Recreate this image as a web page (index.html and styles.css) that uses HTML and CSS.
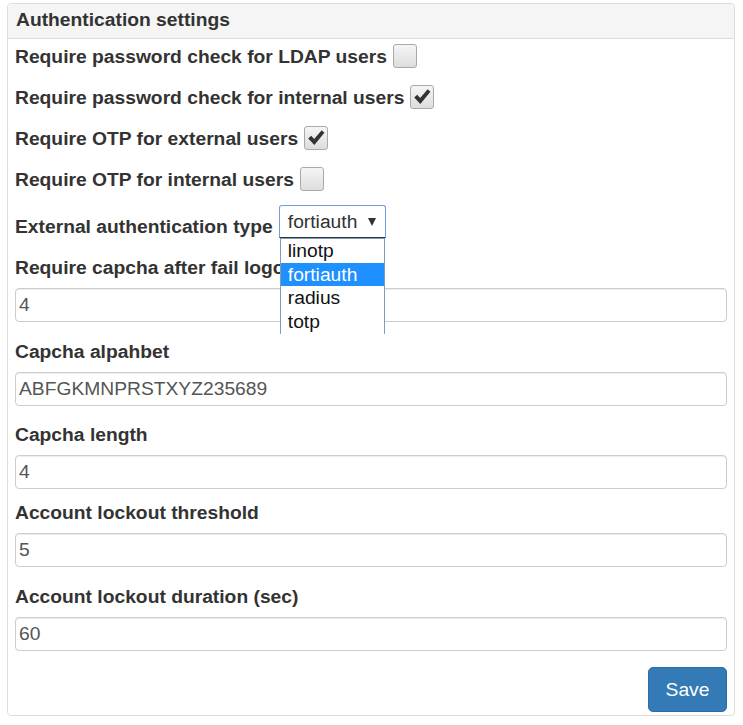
FILE: index.html
```html
<!DOCTYPE html>
<html>
<head>
<meta charset="utf-8">
<title>Authentication settings</title>
<link rel="stylesheet" href="styles.css">
</head>
<body>
<div class="panel">
  <div class="panel-heading">Authentication settings</div>
  <div class="panel-body">
    <div class="check-row">
      <span class="label">Require password check for LDAP users</span>
      <span class="checkbox"></span>
    </div>
    <div class="check-row">
      <span class="label">Require password check for internal users</span>
      <span class="checkbox checked"><svg viewBox="0 0 24 24" width="22" height="22"><path d="M3.5 12.5 L6.8 9.6 L10 13 L18.2 3.6 L21.2 6.4 L10.2 19.6 Z" fill="#333"/></svg></span>
    </div>
    <div class="check-row">
      <span class="label">Require OTP for external users</span>
      <span class="checkbox checked"><svg viewBox="0 0 24 24" width="22" height="22"><path d="M3.5 12.5 L6.8 9.6 L10 13 L18.2 3.6 L21.2 6.4 L10.2 19.6 Z" fill="#333"/></svg></span>
    </div>
    <div class="check-row">
      <span class="label">Require OTP for internal users</span>
      <span class="checkbox"></span>
    </div>
    <div class="select-row">
      <span class="label">External authentication type</span>
      <div class="select-wrap">
        <div class="select">fortiauth<span class="arrow"></span></div>
        <ul class="dropdown">
          <li>linotp</li>
          <li class="active">fortiauth</li>
          <li>radius</li>
          <li>totp</li>
        </ul>
      </div>
    </div>
    <div class="group">
      <div class="label">Require capcha after fail logon</div>
      <input class="input" type="text" value="4">
    </div>
    <div class="group">
      <div class="label">Capcha alpahbet</div>
      <input class="input" type="text" value="ABFGKMNPRSTXYZ235689">
    </div>
    <div class="group group-tight">
      <div class="label">Capcha length</div>
      <input class="input" type="text" value="4">
    </div>
    <div class="group group-short">
      <div class="label">Account lockout threshold</div>
      <input class="input" type="text" value="5">
    </div>
    <div class="group">
      <div class="label">Account lockout duration (sec)</div>
      <input class="input" type="text" value="60">
    </div>
    <div class="actions">
      <button class="btn" type="button">Save</button>
    </div>
  </div>
</div>
</body>
</html>
```
FILE: styles.css
```css
html, body {
  margin: 0;
  padding: 0;
  background: #fff;
}
body {
  font-family: "Liberation Sans", Arial, sans-serif;
  font-size: 19.25px;
  color: #333;
}
.panel {
  margin: 3px 8px 0 7px;
  border: 1px solid #ddd;
  border-radius: 4px;
  background: #fff;
}
.panel-heading {
  background: #f5f5f5;
  border-bottom: 1px solid #ddd;
  border-radius: 4px 4px 0 0;
  padding: 4px 8px 6px;
  line-height: 24px;
  font-weight: bold;
}
.panel-body {
  padding: 5px 7px 3px;
}
.label {
  font-weight: bold;
  line-height: 23px;
  white-space: nowrap;
}
.check-row {
  display: flex;
  align-items: center;
  gap: 6px;
  height: 24px;
  margin-bottom: 17px;
}
.checkbox {
  width: 24px;
  height: 24px;
  box-sizing: border-box;
  border: 1px solid #a9a9a9;
  border-radius: 3px;
  background: linear-gradient(#f5f5f5, #dddddd);
  display: flex;
  align-items: center;
  justify-content: center;
}
.select-row {
  display: flex;
  align-items: flex-end;
  gap: 6px;
  margin-top: -3px;
}
.select-wrap {
  position: relative;
}
.select {
  box-sizing: border-box;
  width: 107px;
  height: 33px;
  border: 1px solid #6d9ee6;
  border-bottom: 1px solid #333;
  border-radius: 3px 3px 0 0;
  padding: 0 8px;
  line-height: 31px;
  display: flex;
  align-items: center;
  justify-content: space-between;
  font-weight: normal;
  background: #fff;
}
.arrow {
  width: 0;
  height: 0;
  border-left: 4px solid transparent;
  border-right: 4px solid transparent;
  border-top: 8px solid #333;
  margin-right: 1px;
}
.dropdown {
  position: absolute;
  z-index: 5;
  left: 1px;
  top: 33px;
  width: 105px;
  height: 96px;
  box-sizing: border-box;
  margin: 0;
  padding: 0;
  list-style: none;
  background: #fff;
  border: 1px solid #7f9db9;
  border-bottom: none;
  overflow: hidden;
}
.dropdown li {
  height: 23.5px;
  line-height: 23.5px;
  padding-left: 7px;
  color: #111;
}
.dropdown li.active {
  background: #1e90ff;
  color: #fff;
}
.group {
  margin-top: 18px;
}
.group-tight {
  margin-top: 17px;
}
.group-short {
  margin-top: 12px;
}
.group .label {
  margin-bottom: 9px;
}
.input {
  display: block;
  box-sizing: border-box;
  width: 100%;
  height: 34px;
  margin: 0;
  padding: 0 3px;
  border: 1px solid #ccc;
  border-radius: 4px;
  box-shadow: inset 0 1px 1px rgba(0, 0, 0, 0.075);
  font-family: "Liberation Sans", Arial, sans-serif;
  font-size: 19.25px;
  color: #555;
  background: #fff;
  outline: none;
}
.actions {
  display: flex;
  justify-content: flex-end;
  margin-top: 16px;
}
.btn {
  width: 79px;
  height: 45px;
  box-sizing: border-box;
  border: 1px solid #2e6da4;
  border-radius: 5px;
  background: #337ab7;
  color: #fff;
  font-family: "Liberation Sans", Arial, sans-serif;
  font-size: 19.25px;
  padding: 0;
  cursor: pointer;
}
```
